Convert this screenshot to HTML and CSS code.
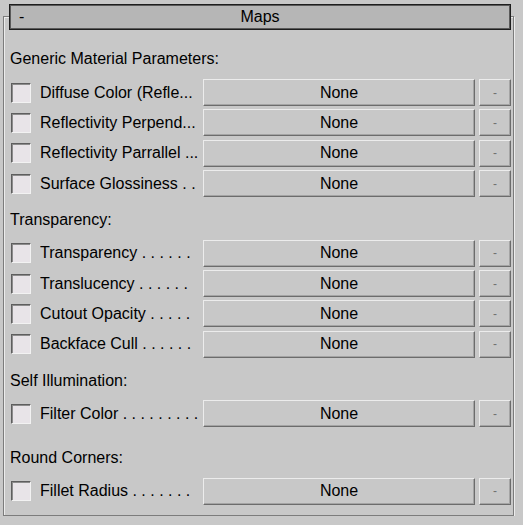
FILE: index.html
```html
<!DOCTYPE html>
<html>
<head>
<meta charset="utf-8">
<link rel="stylesheet" href="styles.css">
</head>
<body>
<div class="rollout">
  <div class="frame">
    <div class="titlebar"><span class="collapse">-</span><span class="title">Maps</span><span></span></div>

    <div class="section first">
      <div class="heading">Generic Material Parameters:</div>
      <div class="rows">
        <div class="row"><span class="check"></span><span class="label">Diffuse Color (Refle...</span><button class="map">None</button><button class="opt">-</button></div>
        <div class="row"><span class="check"></span><span class="label">Reflectivity Perpend...</span><button class="map">None</button><button class="opt">-</button></div>
        <div class="row"><span class="check"></span><span class="label">Reflectivity Parrallel ...</span><button class="map">None</button><button class="opt">-</button></div>
        <div class="row"><span class="check"></span><span class="label">Surface Glossiness . .</span><button class="map">None</button><button class="opt">-</button></div>
      </div>
    </div>

    <div class="section">
      <div class="heading">Transparency:</div>
      <div class="rows">
        <div class="row"><span class="check"></span><span class="label">Transparency . . . . . .</span><button class="map">None</button><button class="opt">-</button></div>
        <div class="row"><span class="check"></span><span class="label">Translucency . . . . . .</span><button class="map">None</button><button class="opt">-</button></div>
        <div class="row"><span class="check"></span><span class="label">Cutout Opacity . . . . .</span><button class="map">None</button><button class="opt">-</button></div>
        <div class="row"><span class="check"></span><span class="label">Backface Cull . . . . . .</span><button class="map">None</button><button class="opt">-</button></div>
      </div>
    </div>

    <div class="section">
      <div class="heading">Self Illumination:</div>
      <div class="rows">
        <div class="row"><span class="check"></span><span class="label">Filter Color . . . . . . . . .</span><button class="map">None</button><button class="opt">-</button></div>
      </div>
    </div>

    <div class="section last">
      <div class="heading">Round Corners:</div>
      <div class="rows">
        <div class="row"><span class="check"></span><span class="label">Fillet Radius . . . . . . .</span><button class="map">None</button><button class="opt">-</button></div>
      </div>
    </div>
  </div>
</div>
</body>
</html>
```
FILE: styles.css
```css
* { box-sizing: border-box; }

body {
  margin: 0;
  background: #c8c8c8;
  font-family: "Liberation Sans", Arial, sans-serif;
  font-size: 16px;
  color: #000;
}

.rollout {
  padding: 16px 0 0 3px;
}

.frame {
  width: 511px;
  height: 500px;
  border: 1px solid #7c7c7c;
  box-shadow: inset 1px 1px 0 #ececec, 1px 1px 0 #ececec;
}

.titlebar {
  margin: -13px 0 0 5px;
  width: 502px;
  height: 26px;
  background: #b6b6b6;
  border: 1px solid #1e1e1e;
  box-shadow: inset 0 0 0 1px #5a5a5a;
  display: grid;
  grid-template-columns: 1fr auto 1fr;
  align-items: center;
  line-height: 22px;
  font-size: 16px;
}

.collapse {
  padding-left: 9px;
}

.title {
  text-align: center;
}

.section {
  margin-top: 13px;
  padding-left: 6px;
}

.section.first { margin-top: 19px; }
.section.last { margin-top: 21px; }

.heading {
  height: 20px;
  line-height: 20px;
  margin-bottom: 9.5px;
  white-space: nowrap;
}

.section.first .heading { margin-bottom: 10px; }

.rows {
  display: flex;
  flex-direction: column;
  gap: 3.4px;
}

.row {
  display: flex;
  align-items: center;
  height: 27px;
}

.check {
  flex: none;
  width: 20px;
  height: 20px;
  margin-left: 1px;
  background: #e8e4e8;
  border: 1px solid;
  border-color: #5e5e5e #f2f2f2 #f2f2f2 #5e5e5e;
  box-shadow: inset 1px 1px 0 #8c8c8c;
}

.label {
  flex: none;
  width: 163px;
  margin-left: 9px;
  white-space: nowrap;
  overflow: hidden;
}

button {
  font: inherit;
  color: #000;
  background: #c8c8c8;
  border: 1px solid;
  border-color: #ececec #6c6c6c #6c6c6c #ececec;
  box-shadow: inset -1px -1px 0 #a4a4a4;
  height: 27px;
  padding: 0;
  margin: 0;
}

.map {
  width: 272px;
}

.opt {
  width: 32px;
  margin-left: 4px;
  font-size: 12px;
  color: #707070;
}
```
